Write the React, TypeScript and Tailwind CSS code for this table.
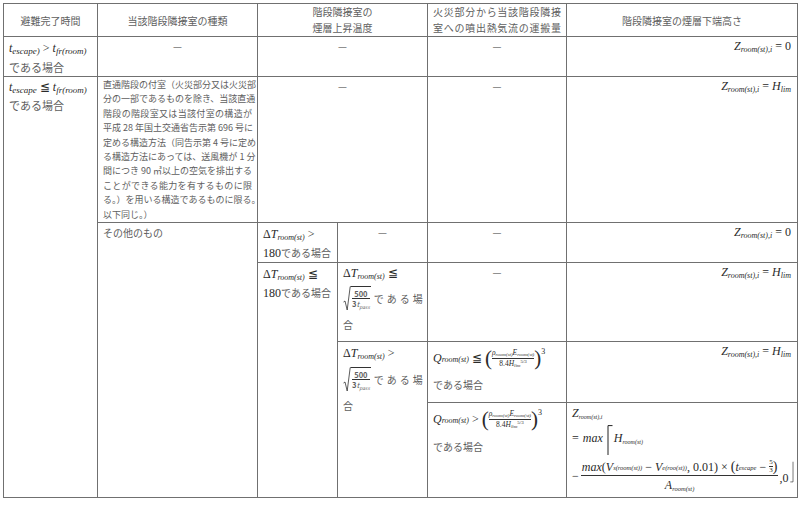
import React from "react";

const math = "font-['Liberation_Serif','DejaVu_Serif',serif] text-[#2a2a2a] text-[12px]";

function I({ children }: { children: React.ReactNode }) {
  return <span className="italic">{children}</span>;
}
function S({ children, c = "text-[8px]" }: { children: React.ReactNode; c?: string }) {
  return <sub className={`${c} italic`}>{children}</sub>;
}

function Sqrt() {
  return (
    <span className="inline-flex items-stretch align-middle">
      <svg width="8" height="25" viewBox="0 0 8 25" className="block">
        <path d="M0.5 16 L2 15 L4.2 24 L7.2 0.6 L8 0.6" stroke="#333" strokeWidth="0.8" fill="none" />
      </svg>
      <span className="border-t border-[#333] mt-[0.5px] px-[1px] flex items-center">
        <span className="inline-flex flex-col items-center leading-none text-[7.5px] not-italic">
          <span className="pb-[1px] font-bold">500</span>
          <span className="border-t border-[#333] w-full text-center pt-[1px]">
            <span className="font-bold">3</span>
            <I>t</I>
            <sub className="text-[5px] italic">pass</sub>
          </span>
        </span>
      </span>
    </span>
  );
}

function Zeq({ rhs }: { rhs: React.ReactNode }) {
  return (
    <div className={`${math} text-right h-[16px] leading-[16px] pr-[1px]`}>
      <I>Z</I>
      <S>room(st),i</S>
      <span> = </span>
      {rhs}
    </div>
  );
}

const Hlim = (
  <>
    <I>H</I>
    <S>lim</S>
  </>
);

function DeltaT({ op }: { op: string }) {
  return (
    <span className={math}>
      <span>Δ</span>
      <I>T</I>
      <S>room(st)</S>
      <span> {op}</span>
    </span>
  );
}

function QFormula({ op }: { op: string }) {
  return (
    <div className={`${math} flex items-center whitespace-nowrap h-[26px]`}>
      <I>Q</I>
      <S>room(st)</S>
      <span className="mx-[3px]">{op}</span>
      <span className="text-[21px] leading-none">(</span>
      <span className="inline-flex flex-col items-center leading-none text-[7.5px]">
        <span className="pb-[1px]">
          <I>ρ</I>
          <sub className="text-[5px] italic">room(st)</sub>
          <I>E</I>
          <sub className="text-[5px] italic">room(st)</sub>
        </span>
        <span className="border-t border-[#333] w-full text-center pt-[1px]">
          8.4<I>H</I>
          <sub className="text-[5px] italic">lim</sub>
          <sup className="text-[5px]">5/3</sup>
        </span>
      </span>
      <span className="text-[21px] leading-none">)</span>
      <span className="text-[8px] self-start mt-[1px]">3</span>
    </div>
  );
}

const longLines = [
  "直通階段の付室（火災部分又は火災部",
  "分の一部であるものを除き、当該直通",
  "階段の階段室又は当該付室の構造が",
  "平成 28 年国土交通省告示第 696 号に",
  "定める構造方法（同告示第 4 号に定め",
  "る構造方法にあっては、送風機が 1 分",
  "間につき 90 ㎥以上の空気を排出する",
  "ことができる能力を有するものに限",
  "る。）を用いる構造であるものに限る。",
];

export default function App() {
  const cell = "border border-[#707070] align-top px-[5px] pt-[1px] pb-0";
  const dash = <div className="text-center h-[16px] leading-[16px] text-[#777]">—</div>;
  return (
    <div className="w-[800px] h-[514px] bg-white pl-[3px] pt-[3px] font-['Noto_Sans_CJK_JP',sans-serif] text-[10px] text-[#5e5e5e]">
      <table className="table-fixed border-collapse w-[794px]">
        <colgroup>
          <col className="w-[94px]" />
          <col className="w-[160px]" />
          <col className="w-[80px]" />
          <col className="w-[90px]" />
          <col className="w-[139px]" />
          <col className="w-[231px]" />
        </colgroup>
        <tbody>
          <tr className="h-[33px]">
            <td className="border border-[#707070] align-middle text-center p-0">避難完了時間</td>
            <td className="border border-[#707070] align-middle text-center p-0">当該階段隣接室の種類</td>
            <td colSpan={2} className="border border-[#707070] align-middle text-center p-0 leading-[16px]">
              <div className="h-[16px]">階段隣接室の</div>
              <div className="h-[16px]">煙層上昇温度</div>
            </td>
            <td className="border border-[#707070] align-middle px-[5px] py-0 leading-[16px]">
              <div className="h-[16px] text-justify [text-align-last:justify]">火災部分から当該階段隣接</div>
              <div className="h-[16px] text-justify [text-align-last:justify]">室への噴出熱気流の運搬量</div>
            </td>
            <td className="border border-[#707070] align-middle text-center p-0">階段隣接室の煙層下端高さ</td>
          </tr>

          <tr className="h-[40px]">
            <td className={cell}>
              <div className={`${math} h-[20px] leading-[20px] whitespace-nowrap`}>
                <I>t</I>
                <S c="text-[9px]">escape)</S> &gt; <I>t</I>
                <S c="text-[9px]">fr(room)</S>
              </div>
              <div className="text-[11px] h-[18px] leading-[18px]">である場合</div>
            </td>
            <td className={cell}>{dash}</td>
            <td colSpan={2} className={cell}>
              {dash}
            </td>
            <td className={cell}>{dash}</td>
            <td className={cell}>
              <Zeq rhs={<span>0</span>} />
            </td>
          </tr>

          <tr className="h-[146px]">
            <td rowSpan={5} className={cell}>
              <div className={`${math} h-[18px] leading-[18px] whitespace-nowrap`}>
                <I>t</I>
                <S c="text-[9px]">escape</S> ≦ <I>t</I>
                <S c="text-[9px]">fr(room)</S>
              </div>
              <div className="text-[11px] h-[18px] leading-[18px]">である場合</div>
            </td>
            <td className={`${cell} text-[9px] leading-[14.4px]`}>
              {longLines.map((l, i) => (
                <div key={i} className="h-[14.4px] text-justify [text-align-last:justify] whitespace-nowrap">
                  {l}
                </div>
              ))}
              <div className="h-[10px]">以下同じ。）</div>
            </td>
            <td colSpan={2} className={cell}>
              {dash}
            </td>
            <td className={cell}>{dash}</td>
            <td className={cell}>
              <Zeq rhs={Hlim} />
            </td>
          </tr>

          <tr className="h-[40px]">
            <td rowSpan={4} className={`${cell} text-[10px]`}>
              <div className="h-[18px] leading-[18px]">その他のもの</div>
            </td>
            <td className={cell}>
              <div className="h-[19px] leading-[19px] whitespace-nowrap">
                <DeltaT op="&gt;" />
              </div>
              <div className="h-[19px] leading-[19px] whitespace-nowrap">
                <span className={math}>180</span>である場合
              </div>
            </td>
            <td className={cell}>{dash}</td>
            <td className={cell}>{dash}</td>
            <td className={cell}>
              <Zeq rhs={<span>0</span>} />
            </td>
          </tr>

          <tr className="h-[79px]">
            <td rowSpan={3} className={cell}>
              <div className="h-[19px] leading-[19px] whitespace-nowrap">
                <DeltaT op="≦" />
              </div>
              <div className="h-[19px] leading-[19px] whitespace-nowrap">
                <span className={math}>180</span>である場合
              </div>
            </td>
            <td className={`${cell} px-[4px]`}>
              <div className="h-[18px] leading-[18px] whitespace-nowrap">
                <DeltaT op="≦" />
              </div>
              <div className="flex items-center h-[32px] whitespace-nowrap">
                <Sqrt />
                <span className="ml-[3px] tracking-[3px]">である場</span>
              </div>
              <div className="h-[24px] leading-[22px]">合</div>
            </td>
            <td className={cell}>{dash}</td>
            <td className={cell}>
              <Zeq rhs={Hlim} />
            </td>
          </tr>

          <tr className="h-[61px]">
            <td rowSpan={2} className={`${cell} px-[4px]`}>
              <div className="h-[20px] leading-[20px] whitespace-nowrap">
                <DeltaT op="&gt;" />
              </div>
              <div className="flex items-center h-[32px] whitespace-nowrap">
                <Sqrt />
                <span className="ml-[3px] tracking-[3px]">である場</span>
              </div>
              <div className="h-[24px] leading-[22px]">合</div>
            </td>
            <td className={`${cell} pt-[3px]`}>
              <QFormula op="≦" />
              <div className="h-[26px] leading-[28px]">である場合</div>
            </td>
            <td className={cell}>
              <Zeq rhs={Hlim} />
            </td>
          </tr>

          <tr className="h-[95px]">
            <td className={`${cell} pt-[3px]`}>
              <QFormula op="&gt;" />
              <div className="h-[26px] leading-[30px]">である場合</div>
            </td>
            <td className={`${cell} pt-[3px] pr-[3px]`}>
              <div className={`${math} text-[9px] h-[14px] leading-[14px]`}>
                <I>Z</I>
                <sub className="text-[6px] italic">room(st),i</sub>
              </div>
              <div className={`${math} text-[10px] flex items-start mt-[5px] h-[26px] whitespace-nowrap`}>
                <span className="mt-[4px]">=</span>
                <span className="italic ml-[4px] mt-[4px]">max</span>
                <svg width="6" height="30" viewBox="0 0 6 30" className="ml-[4px] block">
                  <path d="M5.5 0.6 L1 0.6 L1 30" stroke="#222" strokeWidth="1" fill="none" />
                </svg>
                <span className="mt-[4px] ml-[1px]">
                  <I>H</I>
                  <sub className="text-[6px] italic">room(st)</sub>
                </span>
              </div>
              <div className={`${math} text-[10px] flex items-center whitespace-nowrap mt-[8px]`}>
                <span className="mr-[2px] mt-[2px]">−</span>
                <span className="inline-flex flex-col items-center leading-none">
                  <span className="px-[1px] pb-[1px] flex items-center">
                    <I>max</I>(<I>V</I>
                    <sub className="text-[6.5px] italic">s(room(st))</sub>
                    <span className="mx-[3px]">−</span>
                    <I>V</I>
                    <sub className="text-[6.5px] italic">e(roo(st))</sub>, 0.01)
                    <span className="mx-[3px]">×</span>
                    <span className="text-[14px]">(</span>
                    <I>t</I>
                    <sub className="text-[6.5px] italic">escape</sub>
                    <span className="mx-[3px]">−</span>
                    <span className="inline-flex flex-col items-center text-[7px] leading-none">
                      <span>5</span>
                      <span className="border-t border-[#333] w-full text-center">3</span>
                    </span>
                    <span className="text-[14px]">)</span>
                  </span>
                  <span className="border-t border-[#333] w-full text-center pt-[3px]">
                    <I>A</I>
                    <sub className="text-[6.5px] italic">room(st)</sub>
                  </span>
                </span>
                <span className="mt-[6px] ml-[1px]">,0</span>
                <svg width="6" height="34" viewBox="0 0 6 34" className="ml-[2px] mt-[-6px] block">
                  <path d="M5 0 L5 33.4 L0.5 33.4" stroke="#222" strokeWidth="1" fill="none" />
                </svg>
              </div>
            </td>
          </tr>
        </tbody>
      </table>
    </div>
  );
}
